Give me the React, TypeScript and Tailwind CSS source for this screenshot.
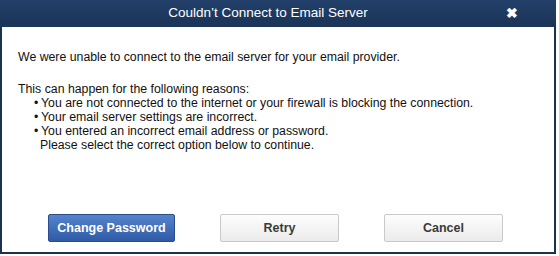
import React from "react";

const reasons = [
  "You are not connected to the internet or your firewall is blocking the connection.",
  "Your email server settings are incorrect.",
  "You entered an incorrect email address or password.",
];

const App = () => {
  return (
    <div className="w-[559px] h-[256px] bg-white font-['Liberation_Sans',Arial,sans-serif]">
      <div className="w-[556px] h-[254px] flex flex-col border-x-2 border-b-2 border-[#1c314e] bg-white">
        {/* Title bar */}
        <div className="relative h-[27px] shrink-0 flex items-center justify-center bg-gradient-to-b from-[#22406a] to-[#1b3457] -mx-[2px] pr-[20px]">
          <span className="text-[13.5px] text-white">
            Couldn’t Connect to Email Server
          </span>
          <span className="absolute right-[38px] top-[6px] text-white text-[14px] font-bold leading-none">
            ✖
          </span>
        </div>

        {/* Body */}
        <div className="flex-1 flex flex-col pl-[16px] pt-[23px] text-[12.3px] leading-[14px] text-[#111]">
          <p>We were unable to connect to the email server for your email provider.</p>
          <p className="mt-[18px]">This can happen for the following reasons:</p>
          <div className="pl-[16px]">
            {reasons.map((r) => (
              <div key={r} className="flex">
                <span className="w-[7px]">•</span>
                <span>{r}</span>
              </div>
            ))}
            <div className="pl-[6px]">Please select the correct option below to continue.</div>
          </div>

          <div className="mt-auto mb-[10px] flex items-center pl-[30px] gap-[45px]">
            <button className="w-[127px] h-[28px] rounded-[2px] border border-[#2a4d8c] bg-gradient-to-b from-[#5683cc] to-[#2f5ba6] text-white text-[12.5px] font-bold">
              Change Password
            </button>
            <button className="w-[119px] h-[28px] rounded-[2px] border border-[#c9c9c9] bg-gradient-to-b from-[#fdfdfd] to-[#ebebeb] text-[#3a3a3a] text-[12.5px] font-bold">
              Retry
            </button>
            <button className="w-[119px] h-[28px] rounded-[2px] border border-[#c9c9c9] bg-gradient-to-b from-[#fdfdfd] to-[#ebebeb] text-[#3a3a3a] text-[12.5px] font-bold">
              Cancel
            </button>
          </div>
        </div>
      </div>
    </div>
  );
};

export default App;
